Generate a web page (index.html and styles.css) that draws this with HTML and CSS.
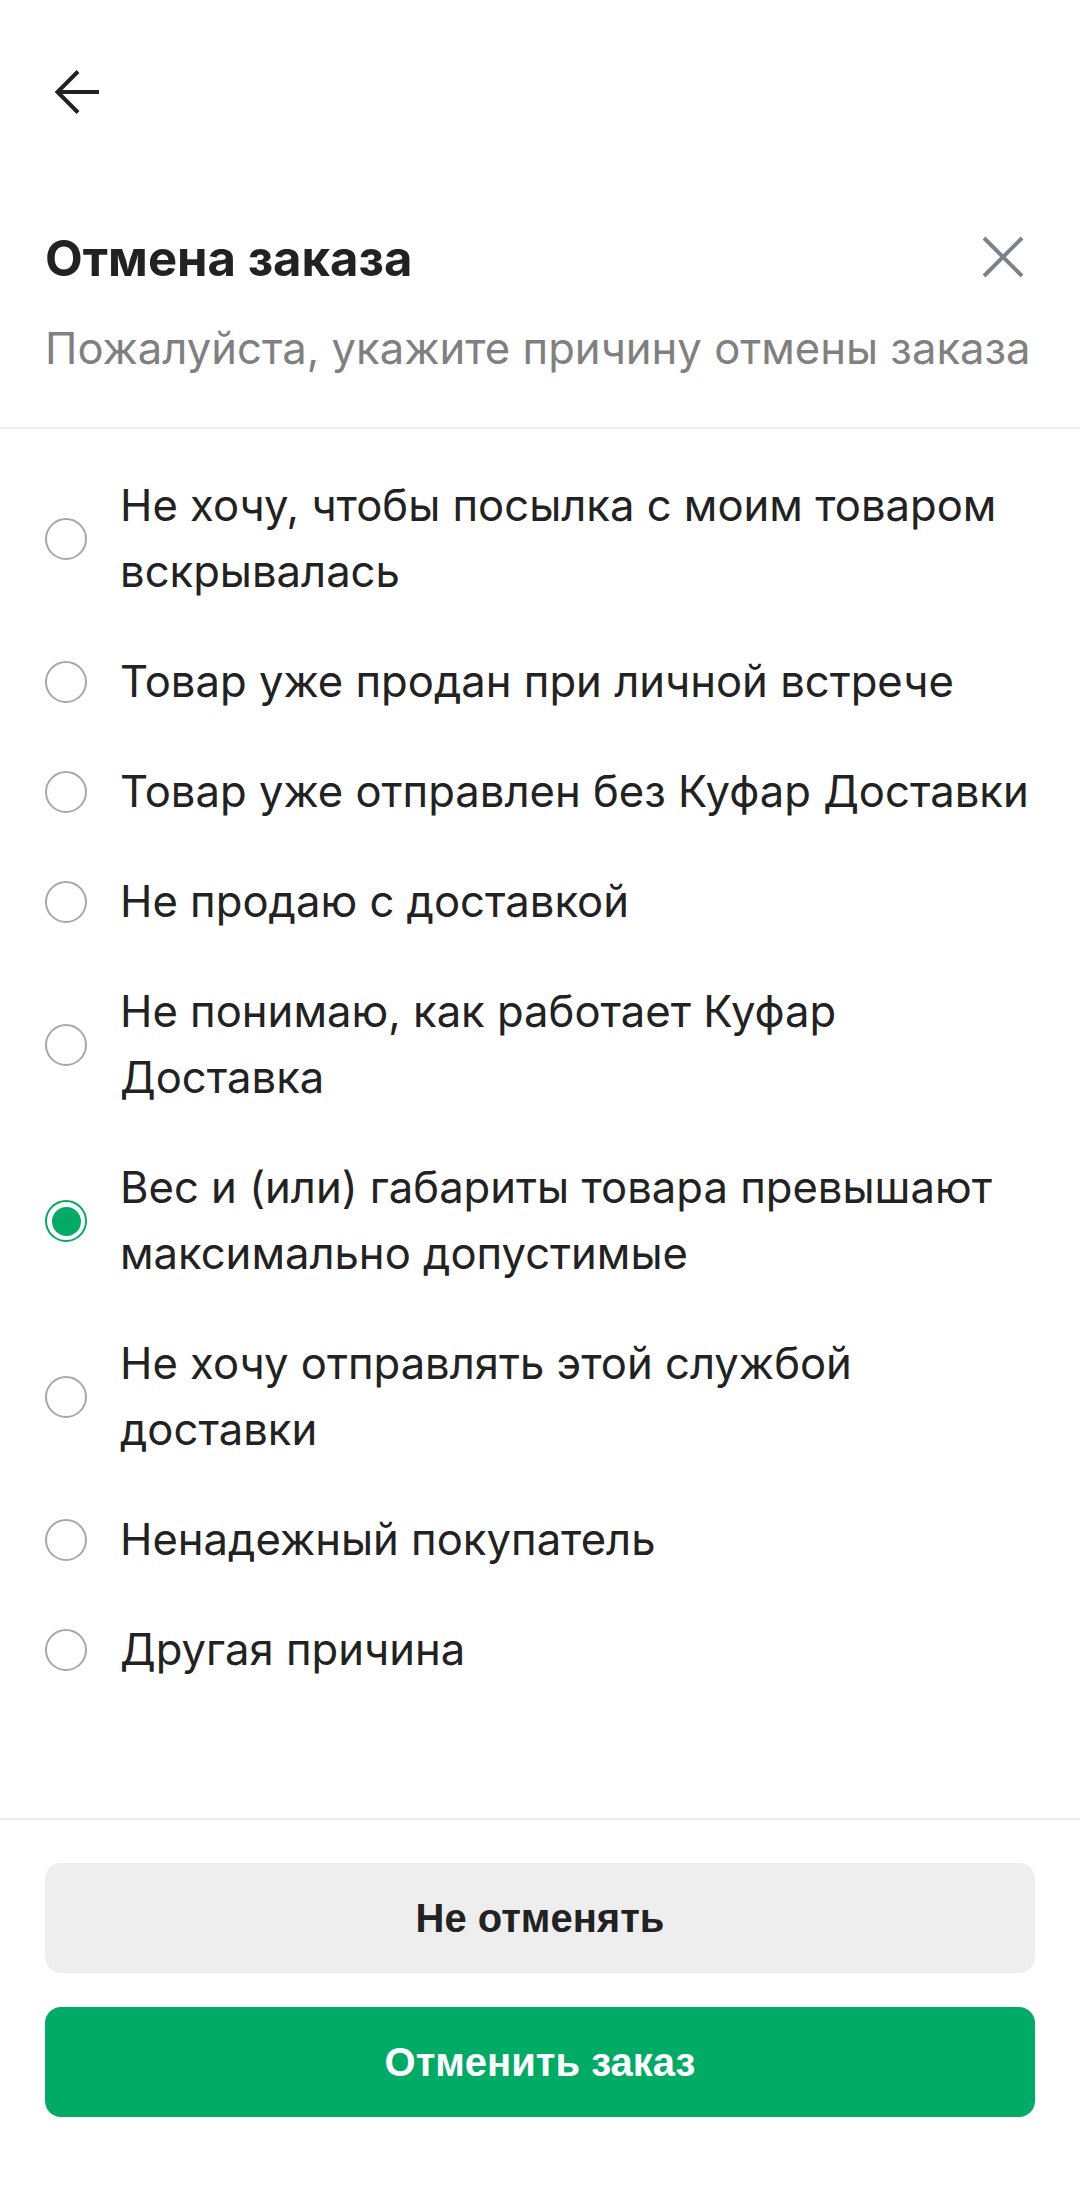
FILE: index.html
```html
<!DOCTYPE html>
<html lang="ru">
<head>
<meta charset="utf-8">
<title>Отмена заказа</title>
<link rel="stylesheet" href="styles.css">
</head>
<body>
<div class="page">
  <header class="topbar">
    <svg class="back" width="48" height="48" viewBox="0 0 48 48" aria-hidden="true">
      <path d="M46 24H5" fill="none" stroke="#222" stroke-width="4"/>
      <path d="M25 3.5L4.5 24L25 44.5" fill="none" stroke="#222" stroke-width="4" stroke-linejoin="miter"/>
    </svg>
  </header>

  <section class="head">
    <div class="title-row">
      <h1 class="title">Отмена заказа</h1>
      <svg class="close" width="48" height="48" viewBox="0 0 48 48" aria-hidden="true">
        <path d="M5 5L43 43M43 5L5 43" fill="none" stroke="#7b8289" stroke-width="4"/>
      </svg>
    </div>
    <p class="subtitle">Пожалуйста, укажите причину отмены заказа</p>
  </section>

  <ul class="reasons">
    <li class="reason"><span class="radio"></span><span class="label">Не хочу, чтобы посылка с моим товаром вскрывалась</span></li>
    <li class="reason"><span class="radio"></span><span class="label">Товар уже продан при личной встрече</span></li>
    <li class="reason"><span class="radio"></span><span class="label">Товар уже отправлен без Куфар Доставки</span></li>
    <li class="reason"><span class="radio"></span><span class="label">Не продаю с доставкой</span></li>
    <li class="reason"><span class="radio"></span><span class="label">Не понимаю, как работает Куфар Доставка</span></li>
    <li class="reason"><span class="radio radio-on"></span><span class="label">Вес и (или) габариты товара превышают максимально допустимые</span></li>
    <li class="reason"><span class="radio"></span><span class="label">Не хочу отправлять этой службой доставки</span></li>
    <li class="reason"><span class="radio"></span><span class="label">Ненадежный покупатель</span></li>
    <li class="reason"><span class="radio"></span><span class="label">Другая причина</span></li>
  </ul>

  <footer class="actions">
    <button class="btn btn-secondary">Не отменять</button>
    <button class="btn btn-primary">Отменить заказ</button>
  </footer>
</div>
</body>
</html>
```

FILE: styles.css
```css
* {
  box-sizing: border-box;
}

html, body {
  margin: 0;
  padding: 0;
  background: #ffffff;
}

body {
  font-family: Inter, "Noto Sans", sans-serif;
  color: #222222;
}

.page {
  display: flex;
  flex-direction: column;
  height: 2196px;
  width: 1080px;
}

.topbar {
  height: 184px;
  display: flex;
  align-items: center;
  padding-left: 53px;
}

.back {
  display: block;
}

.head {
  padding: 42px 53px 0 45px;
}

.title-row {
  display: flex;
  justify-content: space-between;
  align-items: flex-start;
}

.title {
  margin: 3px 0 0 0;
  font-family: Inter, "Noto Sans", sans-serif;
  font-weight: 700;
  font-size: 49px;
  line-height: 60px;
  color: #222222;
}

.close {
  display: block;
  margin-top: 7px;
}

.subtitle {
  margin: 27px 0 0 0;
  font-size: 43.6px;
  line-height: 66px;
  color: #808080;
  white-space: nowrap;
}

.reasons {
  list-style: none;
  margin: 45px 0 0 0;
  padding: 22px 30px 0 45px;
  border-top: 2px solid #ececec;
}

.reason {
  display: flex;
  align-items: center;
  gap: 33px;
  padding: 22px 0;
}

.radio {
  flex: none;
  width: 42px;
  height: 42px;
  border-radius: 50%;
  border: 2.5px solid #a8a8a8;
  display: flex;
  align-items: center;
  justify-content: center;
}

.radio-on {
  border-color: #00ab66;
}

.radio-on::after {
  content: "";
  width: 29px;
  height: 29px;
  border-radius: 50%;
  background: #00ab66;
}

.label {
  font-size: 43.6px;
  line-height: 66px;
  color: #222222;
}

.actions {
  margin-top: auto;
  border-top: 2px solid #ececec;
  padding: 43px 45px 79px 45px;
  display: flex;
  flex-direction: column;
  gap: 34px;
}

.btn {
  height: 110px;
  border: none;
  border-radius: 16px;
  font-family: "Liberation Sans", Arial, sans-serif;
  font-weight: 700;
  font-size: 40px;
  cursor: pointer;
}

.btn-secondary {
  background: #eeeeee;
  color: #222222;
}

.btn-primary {
  background: #00ab66;
  color: #ffffff;
}
```
